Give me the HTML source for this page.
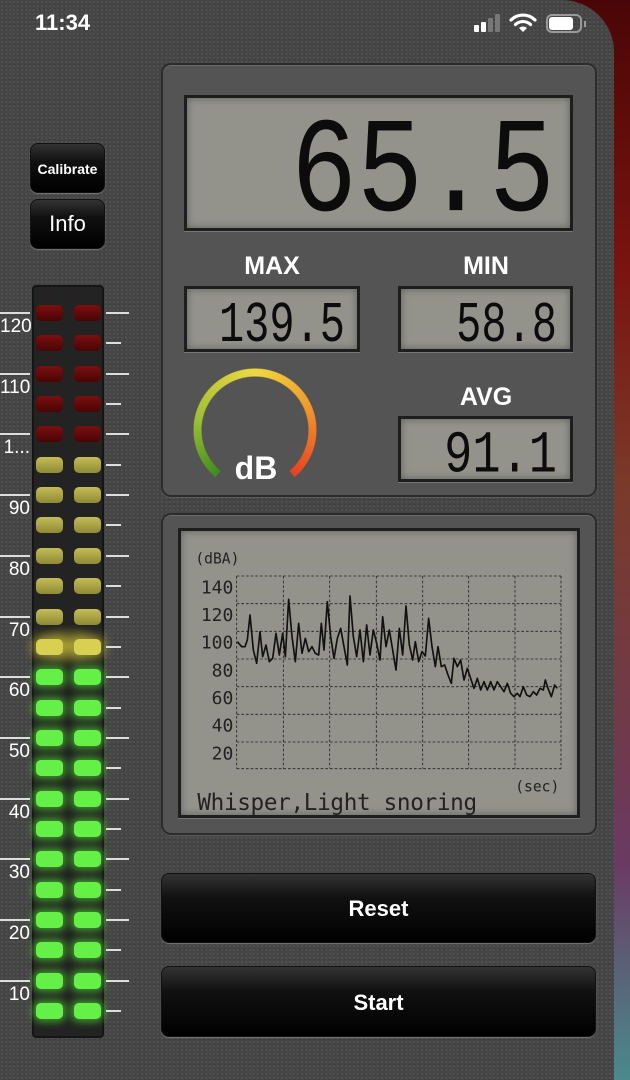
<!DOCTYPE html>
<html><head><meta charset="utf-8"><style>
*{margin:0;padding:0;box-sizing:border-box}
body{width:630px;height:1080px;overflow:hidden;position:relative;font-family:"Liberation Sans",sans-serif;
background:linear-gradient(180deg,#4a0606 0%,#7a1410 25%,#7a3a2a 45%,#6e3a4e 70%,#6a3a64 80%,#4a8a8c 100%)}
.phone{position:absolute;left:0;top:0;width:614px;height:1080px;background:#464646;border-top-right-radius:52px;
background-image:radial-gradient(#505050 1px,transparent 1.2px),radial-gradient(#3c3c3c 1px,transparent 1.2px);background-size:4px 4px,5px 5px;background-position:0 0,2px 2px}
.abs{position:absolute}
.panel{position:absolute;background:#545454;border:2px solid #2c2c2c;border-radius:10px;box-shadow:inset 0 1px 0 #6a6a6a,0 1px 0 #5a5a5a}
.lcd{position:absolute;background:#93938c;border:3px solid #1e1e1e;box-shadow:inset 0 0 8px rgba(0,0,0,.35),0 1px 0 #777}
.dig{position:absolute;font-family:"Liberation Mono",monospace;color:#0c0c0c;transform-origin:right top;line-height:1;white-space:nowrap}
.lbl{position:absolute;color:#fff;font-size:25px;width:120px;text-align:center}
.btn{position:absolute;background:linear-gradient(#333 0%,#111 35%,#000 100%);border:1px solid #111;border-radius:8px;color:#fff;text-align:center;box-shadow:0 1px 1px #777}
.led{position:absolute;width:27px;height:16px;border-radius:5px}
.r{background:linear-gradient(#7a1010,#4a0404)}
.y{background:linear-gradient(#c4bc58,#8e8a34)}
.g{background:#64f046;box-shadow:0 0 8px 3px rgba(80,230,50,.6)}
.tl{position:absolute;height:2px;background:#ddd}
.num{position:absolute;color:#fff;font-size:19px;width:30px;text-align:right;left:0}
</style></head><body>
<div class="phone"></div>
<!-- status -->
<div class="abs" style="left:35px;top:10px;color:#fff;font-weight:bold;font-size:22px">11:34</div>
<div class="abs" style="left:474px;top:25px;width:5px;height:7px;background:#fff;border-radius:1px"></div>
<div class="abs" style="left:481px;top:22px;width:5px;height:10px;background:#fff;border-radius:1px"></div>
<div class="abs" style="left:488px;top:18px;width:5px;height:14px;background:#777;border-radius:1px"></div>
<div class="abs" style="left:495px;top:14px;width:5px;height:18px;background:#777;border-radius:1px"></div>
<svg class="abs" style="left:509px;top:12px" width="28" height="22" viewBox="0 0 28 22"><path d="M2 8 A17 17 0 0 1 26 8" stroke="#fff" stroke-width="3.2" fill="none" stroke-linecap="round"/><path d="M6.5 12.5 A11 11 0 0 1 21.5 12.5" stroke="#fff" stroke-width="3.2" fill="none" stroke-linecap="round"/><path d="M14 20 L10 16 A6 6 0 0 1 18 16 Z" fill="#fff"/></svg>
<div class="abs" style="left:546px;top:14px;width:36px;height:19px;border:2px solid #999;border-radius:6px"></div>
<div class="abs" style="left:549px;top:17px;width:24px;height:13px;background:#fff;border-radius:3px"></div>
<div class="abs" style="left:584px;top:21px;width:2px;height:6px;background:#999"></div>

<!-- calibrate/info -->
<div class="btn" style="left:30px;top:143px;width:75px;height:50px;line-height:50px;font-size:14px;font-weight:bold">Calibrate</div>
<div class="btn" style="left:30px;top:199px;width:75px;height:50px;line-height:48px;font-size:22px">Info</div>

<!-- meter -->
<div class="abs" style="left:32px;top:285px;width:72px;height:753px;background:#232323;border:2px solid #151515;border-radius:4px"></div>
<div class="abs" style="left:32px;top:625px;width:72px;height:42px;background:radial-gradient(ellipse at center,rgba(230,220,60,.55),rgba(200,190,40,0) 70%);filter:blur(2px)"></div>
<div id="leds"></div>

<!-- top panel -->
<div class="panel" style="left:161px;top:63px;width:436px;height:434px"></div>
<div class="lcd" style="left:184px;top:95px;width:389px;height:136px"></div>
<div class="dig" style="right:75px;top:108px;font-size:110px;transform:scaleY(1.23)">65.5</div>
<div class="lbl" style="left:212px;top:252px;font-weight:bold">MAX</div>
<div class="lbl" style="left:426px;top:252px;font-weight:bold">MIN</div>
<div class="lbl" style="left:426px;top:383px;font-weight:bold">AVG</div>
<div class="lcd" style="left:184px;top:286px;width:176px;height:66px"></div>
<div class="lcd" style="left:398px;top:286px;width:175px;height:66px"></div>
<div class="lcd" style="left:398px;top:416px;width:175px;height:66px"></div>
<div class="dig" style="right:285px;top:297px;font-size:42px;transform:scaleY(1.37)">139.5</div>
<div class="dig" style="right:73px;top:297px;font-size:42px;transform:scaleY(1.37)">58.8</div>
<div class="dig" style="right:73px;top:427px;font-size:47px;transform:scaleY(1.27)">91.1</div>
<!-- gauge -->
<div class="abs" style="left:193px;top:368px;width:124px;height:124px;border-radius:50%;
background:conic-gradient(from 220deg,#3e8c1c 0deg,#9cc034 60deg,#f0d840 140deg,#f0a030 200deg,#e84020 280deg,transparent 280deg);
-webkit-mask:radial-gradient(circle,transparent 53px,#000 54px,#000 61px,transparent 62px);mask:radial-gradient(circle,transparent 53px,#000 54px,#000 61px,transparent 62px)"></div>
<div class="abs" style="left:226px;top:450px;width:60px;text-align:center;color:#fff;font-weight:bold;font-size:32px">dB</div>

<!-- graph panel -->
<div class="panel" style="left:161px;top:513px;width:436px;height:322px"></div>
<div class="lcd" style="left:178px;top:528px;width:402px;height:290px"></div>
<svg class="abs" style="left:160px;top:510px" width="440" height="330" viewBox="0 0 1320 990">
<g stroke="#222" stroke-width="2.5" stroke-dasharray="8,6" fill="none">
<path d="M230 198H1203M230 281H1203M230 364H1203M230 447H1203M230 530H1203M230 613H1203M230 696H1203M230 776H1203"/>
<path d="M230 198V776M370 198V776M509 198V776M649 198V776M788 198V776M926 198V776M1065 198V776M1203 198V776"/>
</g>
<g font-family="DejaVu Sans Mono,Liberation Mono,monospace" fill="#222">
<text x="106" y="160" font-size="44">(dBA)</text>
<g font-size="54" text-anchor="end"><text x="220" y="250">140</text><text x="220" y="333">120</text><text x="220" y="416">100</text><text x="220" y="499">80</text><text x="220" y="582">60</text><text x="220" y="665">40</text><text x="220" y="748">20</text></g>
<text x="1198" y="845" font-size="44" text-anchor="end">(sec)</text>
<text x="112" y="900" font-size="68" letter-spacing="-1">Whisper,Light snoring</text>
</g>
<polyline fill="none" stroke="#111" stroke-width="5" stroke-linejoin="round" points="232,395 245,410 255,410 262,390 270,315 280,420 290,460 300,365 308,440 318,405 328,455 338,445 348,370 358,435 368,370 376,440 386,268 396,380 406,455 416,340 426,430 436,385 446,425 456,410 466,430 476,435 484,340 492,420 502,275 512,380 522,445 532,385 542,355 552,410 562,465 570,258 580,380 590,440 600,360 610,455 620,345 630,435 640,360 650,400 660,450 668,320 678,410 688,360 698,420 708,480 718,355 728,435 738,288 748,405 758,450 766,395 776,455 786,425 796,438 806,325 816,410 826,470 834,410 844,470 854,465 864,495 874,520 882,445 892,470 902,450 912,510 922,475 932,505 942,535 952,505 962,540 972,515 982,540 992,515 1002,540 1012,515 1022,530 1032,545 1042,520 1052,550 1062,560 1072,550 1080,560 1090,530 1100,555 1110,560 1120,545 1130,555 1140,535 1150,540 1156,510 1164,535 1174,560 1184,525 1192,535"/>
</svg>

<!-- buttons -->
<div class="btn" style="left:161px;top:873px;width:435px;height:70px;line-height:70px;font-size:22px;font-weight:bold">Reset</div>
<div class="btn" style="left:161px;top:966px;width:435px;height:71px;line-height:71px;font-size:22px;font-weight:bold">Start</div>

<script>
var h='';var labels=['120','110','1...','90','80','70','60','50','40','30','20','10'];
for(var i=0;i<24;i++){var y=313+i*30.35;var c=i<5?'r':(i<12?'y':'g');
var extra=i==11?'background:#d8d050;box-shadow:0 0 10px 4px rgba(220,210,60,.5);':'';
h+='<div class="led '+c+'" style="left:36px;top:'+(y-8)+'px;'+extra+'"></div><div class="led '+c+'" style="left:74px;top:'+(y-8)+'px;'+extra+'"></div>';
var long=i%2==0;h+='<div class="tl" style="left:106px;top:'+(y-1)+'px;width:'+(long?23:15)+'px"></div>';
if(long){h+='<div class="tl" style="left:0;top:'+(y-1)+'px;width:30px"></div><div class="num" style="top:'+(y+3)+'px">'+labels[i/2]+'</div>';}}
document.getElementById('leds').innerHTML=h;
</script>
</body></html>
